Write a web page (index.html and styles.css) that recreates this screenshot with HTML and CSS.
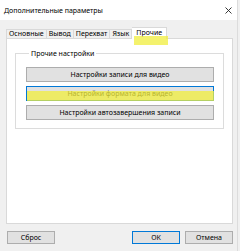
FILE: index.html
```html
<!DOCTYPE html>
<html lang="ru">
<head>
    <meta charset="UTF-8">
    <title>Дополнительные параметры</title>
    <link rel="stylesheet" href="styles.css">
</head>
<body>
    <div class="window">
        <div class="titlebar">
            <span class="title">Дополнительные параметры</span>
            <svg class="close" width="7" height="7" viewBox="0 0 7 7">
                <path d="M0.5 0.5 L6.5 6.5 M6.5 0.5 L0.5 6.5" stroke="#222" stroke-width="0.9" fill="none"/>
            </svg>
        </div>
        <div class="content">
            <div class="tabs">
                <div class="tab">Основные</div>
                <div class="tab">Вывод</div>
                <div class="tab">Перехват</div>
                <div class="tab">Язык</div>
                <div class="tab active">Прочие<span class="marker tab-marker"></span></div>
            </div>
            <div class="panel">
                <fieldset class="group">
                    <legend>Прочие настройки</legend>
                    <button class="btn wide">Настройки записи для видео</button>
                    <button class="btn wide focused">Настройки формата для видео<span class="marker btn-marker"></span></button>
                    <button class="btn wide">Настройки автозавершения записи</button>
                </fieldset>
            </div>
            <div class="footer">
                <button class="btn small">Сброс</button>
                <div class="footer-right">
                    <button class="btn small focused">ОК</button>
                    <button class="btn small">Отмена</button>
                </div>
            </div>
        </div>
    </div>
</body>
</html>
```

FILE: styles.css
```css
/* Окно диалога */
body {
    margin: 0;
    padding: 0;
    background-color: #f0f0f0;
    font-family: 'Noto Sans', 'Liberation Sans', sans-serif;
    font-size: 7px;
    color: #000;
}

.window {
    width: 237px;
    height: 251px;
    background-color: #f0f0f0;
    border-right: 1px solid #dcdcdc;
    overflow: hidden;
}

.titlebar {
    height: 20px;
    background-color: #fff;
    display: flex;
    align-items: center;
    justify-content: space-between;
    padding: 0 5px 0 4px;
}

.title {
    line-height: 9px;
    color: #000;
}

.content {
    padding: 9px 4px 0 6px;
}

/* Вкладки */
.tabs {
    display: flex;
    align-items: flex-end;
    height: 9px;
    position: relative;
    z-index: 1;
}

.tab {
    height: 8px;
    line-height: 8px;
    padding: 0 2px;
    border: 1px solid #d9d9d9;
    border-bottom: none;
    border-right: none;
    background-color: #f0f0f0;
}

.tab:nth-child(4) {
    border-right: 1px solid #d9d9d9;
}

.tab.active {
    position: relative;
    height: 11px;
    line-height: 10px;
    padding: 0 4px;
    margin-bottom: -1px;
    background-color: #fff;
    border-left: none;
    border-right: 1px solid #d9d9d9;
}

.panel {
    height: 186px;
    background-color: #fff;
    border: 1px solid #d9d9d9;
    padding: 10px 8px 0 8px;
    box-sizing: border-box;
}

.group {
    margin: 0;
    padding: 9px 9px 8px 10px;
    border: 1px solid #dcdcdc;
    display: flex;
    flex-direction: column;
    gap: 4px;
}

.group legend {
    padding: 0 2px;
    margin-left: 3px;
    line-height: 9px;
}

/* Кнопки */
.btn {
    font-family: 'Noto Sans', 'Liberation Sans', sans-serif;
    font-size: 7px;
    background-color: #e1e1e1;
    border: 1px solid #adadad;
    color: #000;
    padding: 0;
    margin: 0;
}

.wide {
    height: 15px;
    line-height: 13px;
    width: 100%;
}

.focused {
    border-color: #0078d7;
    position: relative;
}

.small {
    width: 48px;
    height: 13px;
    line-height: 11px;
}

.footer {
    display: flex;
    justify-content: space-between;
    padding-top: 7px;
    padding-left: 1px;
}

.footer-right {
    display: flex;
    gap: 5px;
}

/* Жёлтые пометки */
.marker {
    position: absolute;
    background-color: rgba(240, 238, 60, 0.75);
}

.tab-marker {
    left: 2px;
    top: 8px;
    width: 34px;
    height: 9px;
}

.btn-marker {
    left: 0;
    right: -1px;
    top: 4px;
    height: 10px;
}
```
